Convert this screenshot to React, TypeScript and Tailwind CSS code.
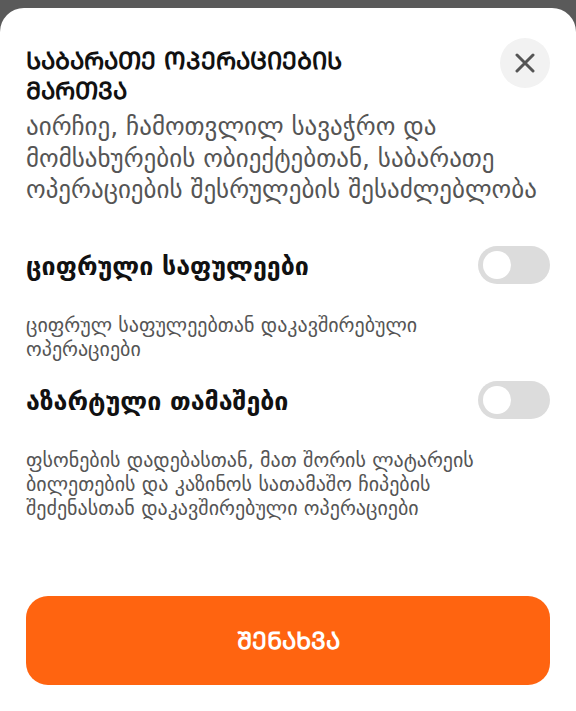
import { useState } from "react";

type Option = {
    key: string;
    title: string;
    description: string;
};

const options: Option[] = [
    {
        key: "digital",
        title: "ციფრული საფულეები",
        description: "ციფრულ საფულეებთან დაკავშირებული ოპერაციები",
    },
    {
        key: "gambling",
        title: "აზარტული თამაშები",
        description:
            "ფსონების დადებასთან, მათ შორის ლატარეის ბილეთების და კაზინოს სათამაშო ჩიპების შეძენასთან დაკავშირებული ოპერაციები",
    },
];

function Toggle({ on, onChange }: { on: boolean; onChange: () => void }) {
    return (
        <button
            onClick={onChange}
            className={`relative h-[38px] w-[72px] shrink-0 rounded-full ${on ? "bg-[#ff6410]" : "bg-[#dcdcdc]"}`}
        >
            <span
                className={`absolute top-[5px] h-[28px] w-[28px] rounded-full bg-white ${on ? "left-[39px]" : "left-[5px]"}`}
            />
        </button>
    );
}

export default function App() {
    const [state, setState] = useState<Record<string, boolean>>({});

    return (
        <div className="flex min-h-[711px] flex-col bg-[#5a5a5a] pt-[8px] font-['DejaVu_Sans',sans-serif]">
            <section className="flex flex-1 flex-col rounded-t-[24px] bg-white px-[26px] pt-[30px] pb-[26px]">
                <div className="flex items-start justify-between gap-4">
                    <h1 className="w-[360px] pt-[8px] text-[24px] leading-[30px] font-bold text-[#111]">
                        ᲡᲐᲑᲐᲠᲐᲗᲔ ᲝᲞᲔᲠᲐᲪᲘᲔᲑᲘᲡ ᲛᲐᲠᲗᲕᲐ
                    </h1>
                    <button className="flex h-[50px] w-[50px] shrink-0 items-center justify-center rounded-full bg-[#f2f2f2]">
                        <svg width="20" height="20" viewBox="0 0 20 20" fill="none">
                            <path d="M2 2L18 18M18 2L2 18" stroke="#555" strokeWidth="3" strokeLinecap="round" />
                        </svg>
                    </button>
                </div>
                <p className="mt-[5px] text-[25px] leading-[31.5px] text-[#555]">
                    აირჩიე, ჩამოთვლილ სავაჭრო და მომსახურების ობიექტებთან, საბარათე ოპერაციების შესრულების შესაძლებლობა
                </p>

                <div className="mt-[40px] flex flex-col gap-[20px]">
                    {options.map((opt) => (
                        <div key={opt.key} className="flex flex-col">
                            <div className="flex items-center justify-between">
                                <p className="pt-[4px] text-[25px] leading-[30px] font-bold text-[#111]">{opt.title}</p>
                                <Toggle
                                    on={!!state[opt.key]}
                                    onChange={() => setState({ ...state, [opt.key]: !state[opt.key] })}
                                />
                            </div>
                            <p className="mt-[29px] max-w-[470px] text-[20px] leading-[24px] text-[#555]">
                                {opt.description}
                            </p>
                        </div>
                    ))}
                </div>

                <div className="flex-1" />
                <button className="h-[89px] w-full rounded-[22px] bg-[#ff6410] text-[24px] font-bold text-white">
                    ᲨᲔᲜᲐᲮᲕᲐ
                </button>
            </section>
        </div>
    );
}
